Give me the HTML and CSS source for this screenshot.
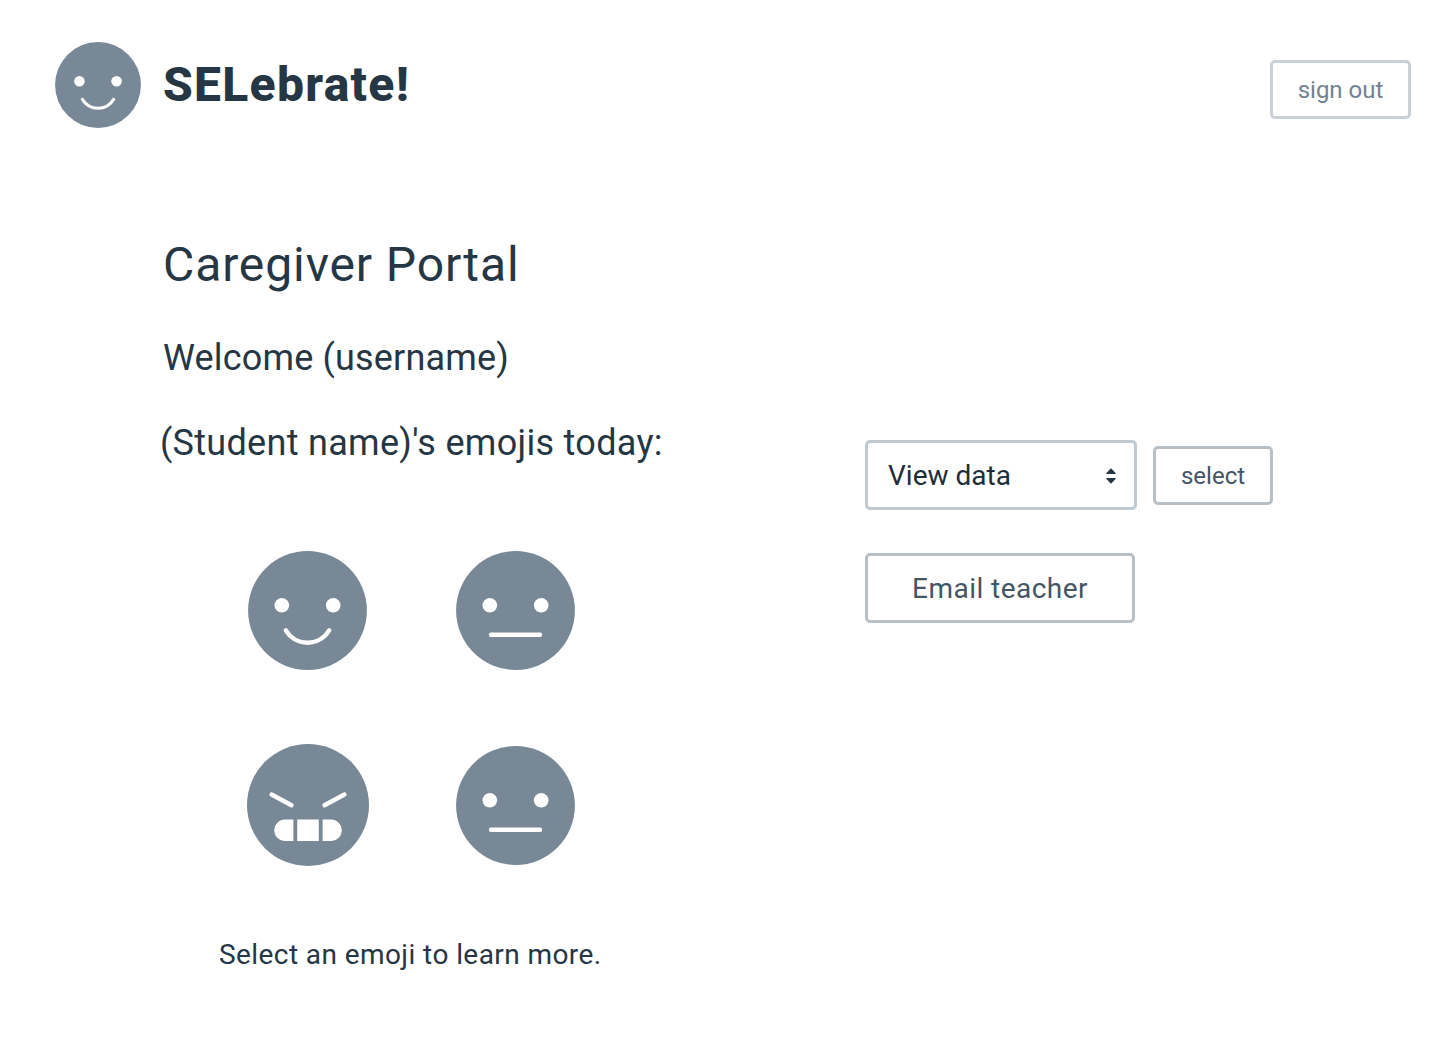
FILE: index.html
```html
<!DOCTYPE html>
<html lang="en">
<head>
<meta charset="utf-8">
<title>SELebrate! Caregiver Portal</title>
<link rel="stylesheet" href="styles.css">
</head>
<body>
<svg class="sprite" aria-hidden="true">
  <symbol id="happy" viewBox="0 0 119 119">
    <circle class="skin" cx="59.5" cy="59.5" r="59.4"/>
    <circle class="fill" cx="33.8" cy="54.3" r="7.3"/>
    <circle class="fill" cx="85.2" cy="54.3" r="7.3"/>
    <path class="line" d="M37.8 79.3A25.2 25.2 0 0 0 81.2 79.3"/>
  </symbol>
  <symbol id="neutral" viewBox="0 0 119 119">
    <circle class="skin" cx="59.5" cy="59.5" r="59.4"/>
    <circle class="fill" cx="33.8" cy="54.3" r="7.3"/>
    <circle class="fill" cx="85.2" cy="54.3" r="7.3"/>
    <path class="line" d="M35 83.8H84"/>
  </symbol>
  <symbol id="angry" viewBox="0 0 122 122">
    <circle class="skin" cx="61" cy="61" r="61"/>
    <path class="line" d="M24.6 50.5L44.5 61.3M97.4 50.5L77.5 61.3"/>
    <path class="fill" d="M46.4 75.5V97H38A10.75 10.75 0 0 1 38 75.5ZM50.2 75.5H71.8V97H50.2ZM75.6 75.5H84A10.75 10.75 0 0 1 84 97H75.6Z"/>
  </symbol>
</svg>

<header class="header">
  <div class="brand">
    <svg class="logo"><use href="#happy"/></svg>
    <span class="brand-name">SELebrate!</span>
  </div>
  <button class="button sign-out"><span>sign out</span></button>
</header>

<main class="main">
  <section class="overview">
    <h1 class="title">Caregiver Portal</h1>
    <p class="welcome">Welcome (username)</p>
    <h2 class="subtitle">(Student name)'s emojis today:</h2>
    <div class="faces">
      <svg class="face"><use href="#happy"/></svg>
      <svg class="face"><use href="#neutral"/></svg>
      <svg class="face face-angry"><use href="#angry"/></svg>
      <svg class="face"><use href="#neutral"/></svg>
    </div>
    <p class="hint">Select an emoji to learn more.</p>
  </section>

  <section class="actions">
    <div class="picker">
      <button class="button dropdown">
        <span>View data</span>
        <svg class="arrows" viewBox="0 0 12 16"><path d="M1.2 5.2L6 0.2L10.8 5.2Q11 5.9 10.2 5.9H1.8Q1 5.9 1.2 5.2ZM1.2 10.8L6 15.8L10.8 10.8Q11 10.1 10.2 10.1H1.8Q1 10.1 1.2 10.8Z"/></svg>
      </button>
      <button class="button select"><span>select</span></button>
    </div>
    <button class="button email"><span>Email teacher</span></button>
  </section>
</main>
</body>
</html>
```
FILE: styles.css
```css
* {
  box-sizing: border-box;
}

body {
  margin: 0;
  min-height: 1058px;
  background: #fff;
  color: #253644;
  font-family: Roboto, "Liberation Sans", sans-serif;
  white-space: nowrap;
}

h1, h2, p {
  margin: 0;
  font-weight: 400;
}

.sprite {
  display: block;
  width: 0;
  height: 0;
}

.skin { fill: #788896; }
.fill { fill: #fff; }
.line {
  fill: none;
  stroke: #fff;
  stroke-width: 4.4;
  stroke-linecap: round;
}

.header {
  display: flex;
  justify-content: space-between;
  align-items: flex-start;
  padding: 42px 29px 0 55px;
  height: 235px;
}

.brand {
  display: flex;
  align-items: center;
  gap: 22px;
}

.logo {
  width: 86px;
  height: 86px;
}

.brand-name {
  font-size: 48px;
  line-height: 60px;
  font-weight: 800;
  letter-spacing: 1.3px;
}

.button {
  display: flex;
  align-items: center;
  justify-content: center;
  padding: 0;
  background: #fff;
  border: 3px solid #b8c0c7;
  border-radius: 5px;
  color: #445565;
  font-family: inherit;
  font-size: 28px;
}

.sign-out {
  width: 141px;
  height: 59px;
  margin-top: 18px;
  padding-top: 1px;
  border-color: #c9d0d7;
  color: #728291;
  font-size: 24px;
}

.main {
  display: grid;
  grid-template-columns: 702px 1fr;
  padding-left: 163px;
}

.title {
  font-size: 48px;
  line-height: 60px;
  letter-spacing: 0.9px;
}

.welcome,
.subtitle {
  font-size: 36px;
  line-height: 48px;
}

.welcome {
  margin-top: 39px;
  letter-spacing: 0.17px;
}

.subtitle {
  margin-top: 37px;
  margin-left: -3px;
  letter-spacing: 0.3px;
}

.faces {
  display: grid;
  grid-template: repeat(2, 195px) / repeat(2, 208px);
  place-items: center;
  margin: 46px 0 0 40px;
}

.face {
  width: 119px;
  height: 119px;
}

.face-angry {
  width: 122px;
  height: 122px;
  margin: 0 0 2px 2px;
}

.hint {
  margin: 32px 0 0 56px;
  font-size: 28px;
  line-height: 40px;
  letter-spacing: 0.42px;
}

.actions {
  display: flex;
  flex-direction: column;
  align-items: flex-start;
  gap: 43px;
  padding-top: 205px;
}

.picker {
  display: flex;
  align-items: center;
  gap: 16px;
}

.dropdown {
  justify-content: space-between;
  width: 272px;
  height: 70px;
  padding: 1px 17px 0 20px;
  border-color: #bfc9d2;
  color: #1d2d3a;
}

.arrows {
  width: 12px;
  height: 16px;
  fill: #253644;
}

.select {
  width: 120px;
  height: 59px;
  padding-top: 1px;
  font-size: 24px;
}

.email {
  width: 270px;
  height: 70px;
  letter-spacing: 0.45px;
}
```
